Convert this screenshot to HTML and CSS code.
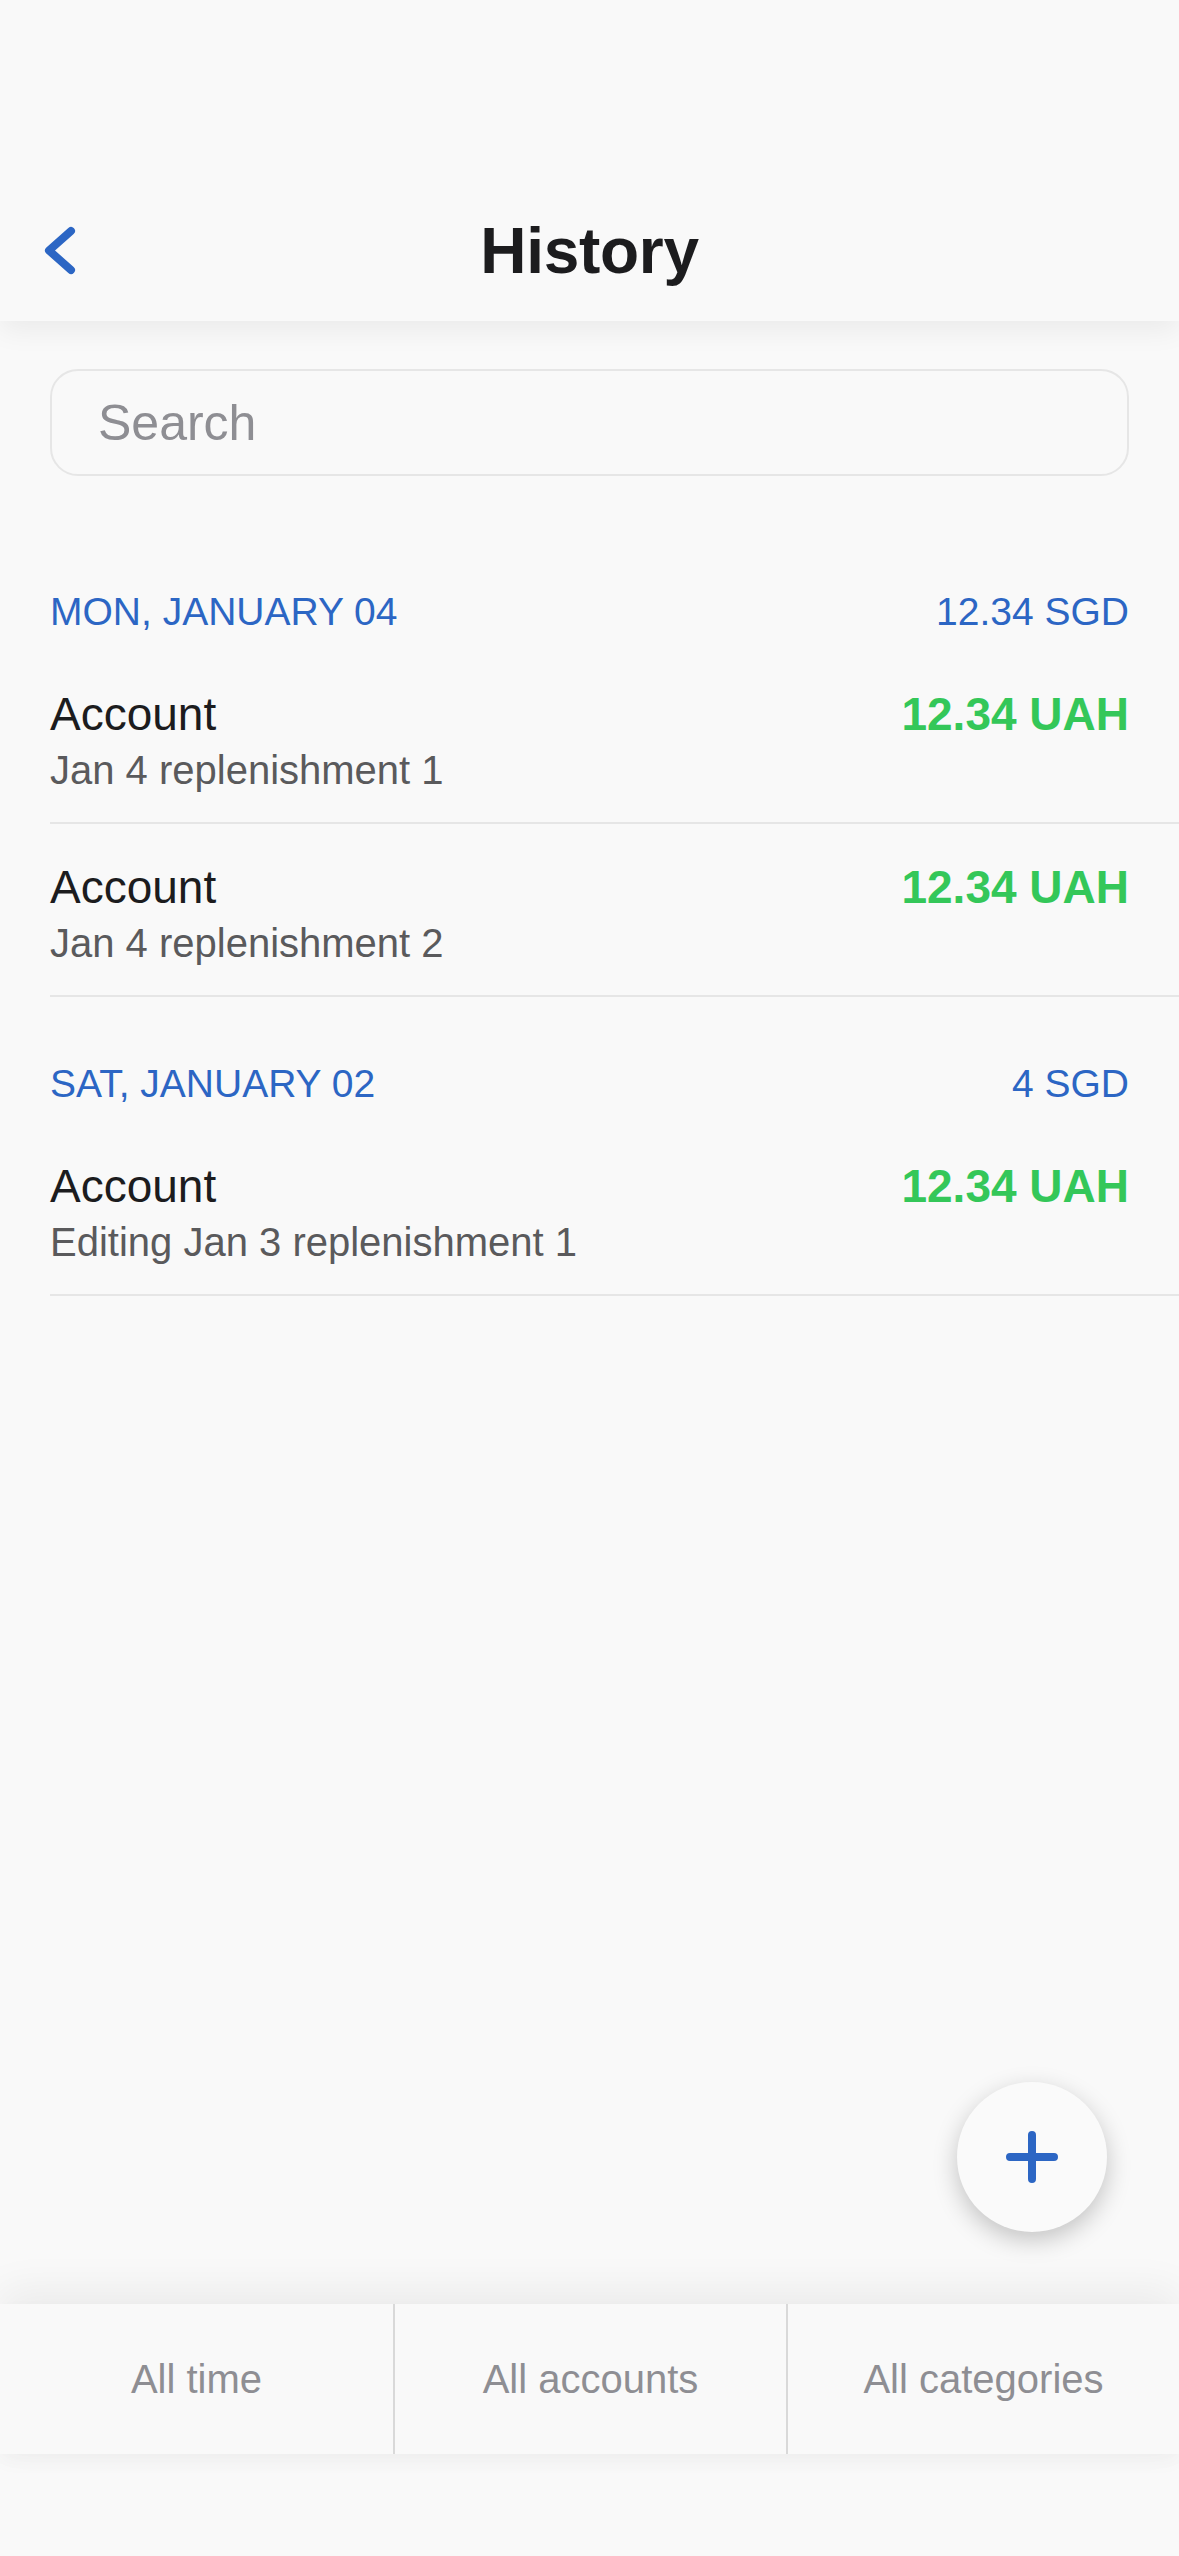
FILE: index.html
```html
<!DOCTYPE html>
<html lang="en">
<head>
<meta charset="utf-8">
<title>History</title>
<link rel="stylesheet" href="styles.css">
</head>
<body>
<div class="screen">
  <header class="nav">
    <div class="nav-row">
      <div class="nav-left">
        <svg class="back" width="40" height="54" viewBox="0 0 40 54" aria-label="Back">
          <path d="M31 7 L9 26.5 L31 46" fill="none" stroke="#2c66c4" stroke-width="8" stroke-linecap="round" stroke-linejoin="round"/>
        </svg>
      </div>
      <h1 class="title">History</h1>
      <div class="nav-right"></div>
    </div>
  </header>

  <main class="content">
    <div class="search-wrap">
      <input class="search" type="text" placeholder="Search">
    </div>

    <div class="list">
      <section class="day">
        <div class="day-head"><span>MON, JANUARY 04</span><span>12.34 SGD</span></div>
        <div class="row">
          <div class="row-top"><span class="acc">Account</span><span class="amt">12.34 UAH</span></div>
          <div class="note">Jan 4 replenishment 1</div>
        </div>
        <div class="row">
          <div class="row-top"><span class="acc">Account</span><span class="amt">12.34 UAH</span></div>
          <div class="note">Jan 4 replenishment 2</div>
        </div>
      </section>

      <section class="day">
        <div class="day-head"><span>SAT, JANUARY 02</span><span>4 SGD</span></div>
        <div class="row">
          <div class="row-top"><span class="acc">Account</span><span class="amt">12.34 UAH</span></div>
          <div class="note">Editing Jan 3 replenishment 1</div>
        </div>
      </section>
    </div>
  </main>

  <button class="fab" aria-label="Add">
    <svg width="56" height="56" viewBox="0 0 56 56">
      <path d="M28 6 V50 M6 28 H50" fill="none" stroke="#2c66c4" stroke-width="8" stroke-linecap="round"/>
    </svg>
  </button>

  <nav class="filters">
    <div class="filter">All time</div>
    <div class="filter">All accounts</div>
    <div class="filter">All categories</div>
  </nav>
  <div class="home-area"></div>
</div>
</body>
</html>
```

FILE: styles.css
```css
* {
  box-sizing: border-box;
}

html, body {
  margin: 0;
  padding: 0;
  background: #f9f9f9;
}

body {
  font-family: "Liberation Sans", Arial, sans-serif;
  color: #1c1c1e;
}

.screen {
  position: relative;
  width: 1179px;
  height: 2556px;
  overflow: hidden;
  display: flex;
  flex-direction: column;
  background: #f9f9f9;
}

/* Header */
.nav {
  position: relative;
  z-index: 2;
  height: 321px;
  padding-top: 219px;
  background: #f9f9f9;
  box-shadow: 0 10px 26px rgba(0, 0, 0, 0.06);
}

.nav-row {
  display: grid;
  grid-template-columns: 1fr auto 1fr;
  align-items: center;
  height: 64px;
}

.nav-left {
  display: flex;
  align-items: center;
  padding-left: 40px;
}

.back {
  display: block;
}

.title {
  margin: 0;
  font-size: 64px;
  line-height: 64px;
  font-weight: 700;
  color: #1c1c1e;
  letter-spacing: -0.3px;
}

/* Content */
.content {
  flex: 1;
}

.search-wrap {
  padding: 48px 50px 0;
}

.search {
  display: block;
  width: 100%;
  height: 107px;
  border: 2px solid #e6e6e6;
  border-radius: 28px;
  background: transparent;
  padding: 0 46px;
  font-family: "Liberation Sans", Arial, sans-serif;
  font-size: 50px;
  color: #1c1c1e;
  outline: none;
}

.search::placeholder {
  color: #8e8e93;
}

.list {
  padding-top: 49px;
}

.day-head {
  display: flex;
  justify-content: space-between;
  margin-top: 63px;
  margin-bottom: 15px;
  padding: 0 50px;
  font-size: 39px;
  line-height: 48px;
  color: #2c66c4;
  text-transform: uppercase;
}

.row {
  margin-left: 50px;
  padding: 37px 50px 28px 0;
  border-bottom: 2px solid #e6e6e6;
}

.row-top {
  display: flex;
  justify-content: space-between;
  align-items: baseline;
  line-height: 52px;
}

.acc {
  font-size: 46px;
  color: #1c1c1e;
}

.amt {
  font-size: 46px;
  font-weight: 700;
  color: #34c759;
}

.note {
  margin-top: 6px;
  font-size: 40px;
  line-height: 48px;
  color: #5a5a5c;
}

/* Floating add button */
.fab {
  position: absolute;
  right: 72px;
  bottom: 324px;
  z-index: 3;
  width: 150px;
  height: 150px;
  border: none;
  border-radius: 50%;
  background: #fafafa;
  box-shadow: 0 8px 24px rgba(0, 0, 0, 0.22);
  display: flex;
  align-items: center;
  justify-content: center;
  padding: 0;
}

.fab svg {
  display: block;
}

/* Bottom filters */
.filters {
  position: relative;
  z-index: 2;
  display: grid;
  grid-template-columns: repeat(3, 1fr);
  height: 150px;
  background: #f9f9f9;
  box-shadow: 0 -14px 40px rgba(0, 0, 0, 0.06), 0 8px 18px rgba(0, 0, 0, 0.03);
}

.filter {
  display: flex;
  align-items: center;
  justify-content: center;
  font-size: 40px;
  line-height: 48px;
  color: #8e8e93;
}

.filter + .filter {
  border-left: 2px solid #d9d9d9;
}

.home-area {
  height: 102px;
  background: #f9f9f9;
}
```
